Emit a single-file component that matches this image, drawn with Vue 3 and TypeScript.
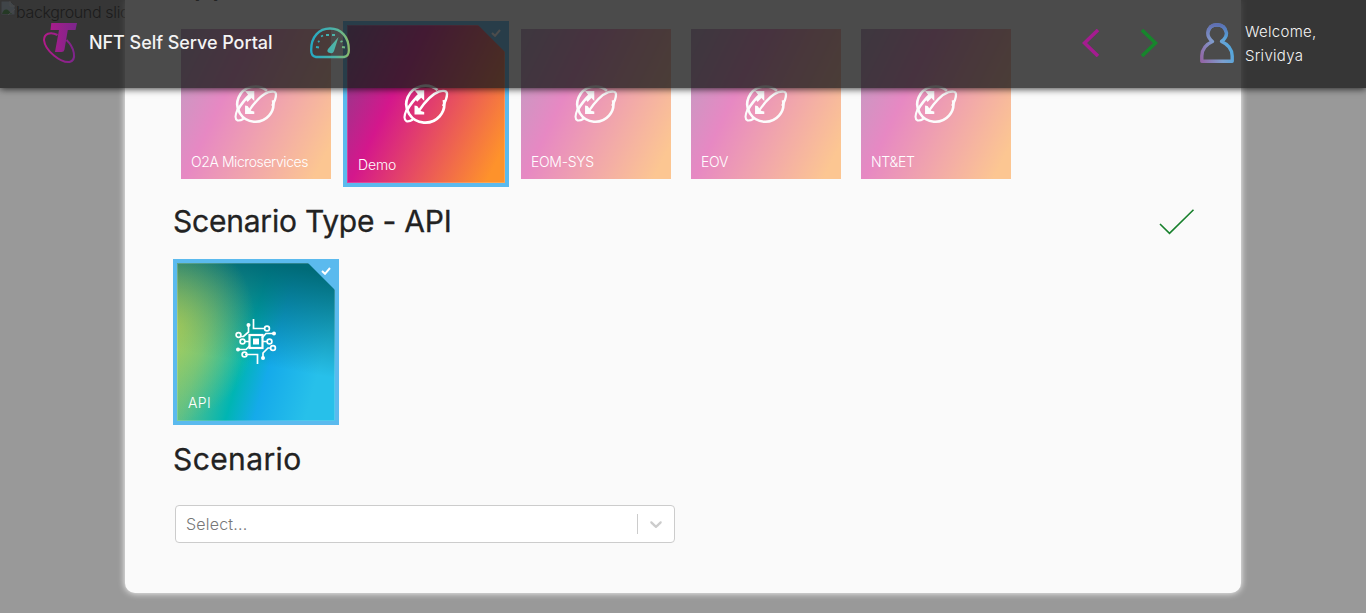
<script setup lang="ts">
interface Tile {
  name: string
  selected: boolean
}

const applications: Tile[] = [
  { name: 'O2A Microservices', selected: false },
  { name: 'Demo', selected: true },
  { name: 'EOM-SYS', selected: false },
  { name: 'EOV', selected: false },
  { name: 'NT&ET', selected: false },
]
</script>

<template>
  <div class="page">
    <div class="backdrop">
      <svg class="broken" viewBox="0 0 16 16">
        <path d="M1 1h9l5 5v9H1z" fill="#c7dcf0" stroke="#909090" />
        <path d="M2 14c1-4 4-6 7-3l3 3z" fill="#4ca64c" />
        <path d="M10 1v5h5M15 9l-7 6" fill="none" stroke="#eee" />
      </svg>
      <span>background slideshow</span>
    </div>

    <header class="topbar">
      <svg class="logo" viewBox="0 0 34 42">
        <defs>
          <linearGradient id="brand" x1="0" x2="34" y1="0" y2="0" gradientUnits="userSpaceOnUse">
            <stop offset="0" stop-color="#b51a8a" />
            <stop offset="1" stop-color="#79268b" />
          </linearGradient>
        </defs>
        <path d="M8.300 1H34l-1.500 7h-7.700L21.500 27.500Q21 30 18.500 30H12l4-22H7.500z" fill="url(#brand)" />
        <path
          d="M14.500 13C7 9 1 12 1 18c1 11 17 23 25.500 22C34.500 38 31 25 23.500 18"
          fill="none" stroke="url(#brand)" stroke-width="2"
        />
      </svg>
      <span class="brand">NFT Self Serve Portal</span>
      <svg class="gauge" viewBox="0 0 40 32">
        <defs>
          <linearGradient id="dial" x1="0" x2="40" y1="0" y2="0" gradientUnits="userSpaceOnUse">
            <stop offset="0" stop-color="#23a8c4" />
            <stop offset=".6" stop-color="#4db3a8" />
            <stop offset="1" stop-color="#8cba68" />
          </linearGradient>
        </defs>
        <path
          d="M6 30Q1 29 1.200 23C1 10 9 1.500 20 1.500S39 10 38.800 23Q39 29 34 30Z"
          fill="none" stroke="url(#dial)" stroke-width="2.300"
        />
        <path d="M28.500 10L24 24q-1 3-4 2-4-1-2-4z" fill="url(#dial)" />
        <path
          d="M16 8h3M22 8h3M11 9.500l2-1M8 15l1.500-1M6 20l3 .5M30.500 15l2-1M32 20l3 .5"
          stroke="url(#dial)" stroke-width="1.800"
        />
      </svg>
      <div class="right">
        <svg class="prev" viewBox="0 0 18 28">
          <path d="M16 1L2.500 14 16 27" fill="none" stroke="#a51c90" stroke-width="3.600" />
        </svg>
        <svg class="next" viewBox="0 0 18 28">
          <path d="M2 1l13.500 13L2 27" fill="none" stroke="#17852c" stroke-width="3.600" />
        </svg>
        <svg class="user" viewBox="0 0 34 40">
          <defs>
            <linearGradient id="person" x1="0" y1="1" x2="1" y2=".5">
              <stop offset="0" stop-color="#9366a6" />
              <stop offset=".55" stop-color="#7da0cf" />
              <stop offset="1" stop-color="#4ba8df" />
            </linearGradient>
            <linearGradient id="personTop" x1="0" x2="0" y1="0" y2="1">
              <stop offset="0" stop-color="#5f62aa" stop-opacity=".8" />
              <stop offset=".4" stop-color="#5f62aa" stop-opacity="0" />
            </linearGradient>
          </defs>
          <g fill="none" stroke-width="3.400" stroke-linejoin="round">
            <path d="M2 38.200H32.200V33Q32 23 21.500 18.500Q26.500 15 26.500 10Q25 2 17 1.800Q9 2 7.800 10Q7.800 15 12.500 18.500Q2 23 1.800 33V38.200Z" stroke="url(#person)" />
            <path d="M2 38.200H32.200V33Q32 23 21.500 18.500Q26.500 15 26.500 10Q25 2 17 1.800Q9 2 7.800 10Q7.800 15 12.500 18.500Q2 23 1.800 33V38.200Z" stroke="url(#personTop)" />
          </g>
        </svg>
        <div class="welcome"><div>Welcome,</div><div class="name">Srividya</div></div>
      </div>
    </header>

    <main class="card">
      <div class="content">
        <div class="heading"><h2 class="h-app">Application - Demo</h2></div>
        <div class="tiles">
          <div v-for="tile in applications" :key="tile.name" class="slot">
            <div class="tile pink" :class="{ selected: tile.selected }">
              <svg class="globe" viewBox="0 0 46 42">
                <g fill="none" stroke="#fff" stroke-width="2.700">
                  <path d="M34.500 7A19 18.500 0 1 0 40.800 17" />
                  <path d="M3.500 28Q9 18 18 10" />
                  <path d="M15 29C21 20 29 11 36 8.500Q44 6.500 44 11Q44 16 40 23" stroke-width="2.400" />
                  <path d="M3.500 27Q-.5 36 3.500 38.200Q6 39 10 36.500" stroke-width="2.200" />
                </g>
                <path d="M11.500 7.300h9.700v10.500l-3-3-4 4-2-2.500 3-4.500zM11.500 22.500v9h9.700v-2.500l-3.500-1-3.500-5z" fill="#fff" />
              </svg>
              <span class="label" :class="{ long: tile.name.length > 10 }">{{ tile.name }}</span>
              <span v-if="tile.selected" class="corner">
                <svg viewBox="0 0 10 8"><path d="M1 4l3 2.800L9 1" /></svg>
              </span>
              <span v-else class="veil"></span>
            </div>
          </div>
        </div>

        <div class="heading">
          <h2 class="h-type">Scenario Type - API</h2>
          <svg class="done" viewBox="0 0 36 26">
            <path d="M1 15l9.500 9.300L34.500 .8" fill="none" stroke="#17802c" stroke-width="1.600" />
          </svg>
        </div>
        <div class="tiles">
          <div class="slot">
            <div class="tile blue selected">
              <svg class="chip" viewBox="0 0 42 46">
                <g fill="none" stroke="#fff" stroke-width="1.700">
                  <path d="M18.500 1v9.500H29M13.500 8v6l-5 4.500H5M10 23.500h5M27 23.500h5M27 20l4-4.500h8M3 31.500h8l4-4M10 36.500h12.500V46M28 40v-5l5-5h3" />
                  <circle cx="32" cy="10.500" r="2.400" /><circle cx="3.500" cy="17" r="2.400" />
                  <circle cx="7.500" cy="23.500" r="2.400" /><circle cx="34.500" cy="23.500" r="2.400" />
                  <circle cx="38" cy="30" r="2.400" /><circle cx="9.500" cy="36.500" r="2.400" />
                  <rect x="14.500" y="17" width="13" height="13" stroke-width="2.200" />
                </g>
                <path d="M18 20.500h6v6h-6z" fill="#fff" />
                <g fill="#fff">
                  <circle cx="13.500" cy="7" r="2" /><circle cx="39" cy="15.500" r="2" />
                  <circle cx="3" cy="31.500" r="2" /><circle cx="28" cy="40" r="2" />
                </g>
              </svg>
              <span class="label api">API</span>
              <span class="corner">
                <svg viewBox="0 0 10 8"><path d="M1 4l3 2.800L9 1" /></svg>
              </span>
            </div>
          </div>
        </div>

        <div class="heading"><h2 class="h-scenario">Scenario</h2></div>
        <div class="select">
          <span class="placeholder">Select...</span>
          <span class="divider"></span>
          <svg class="chevron" viewBox="0 0 20 20">
            <path d="M4.516 7.548c.436-.446 1.043-.481 1.576 0L10 11.295l3.908-3.747c.533-.481 1.141-.446 1.574 0 .436.445.408 1.197 0 1.615-.406.418-4.695 4.502-4.695 4.502a1.095 1.095 0 0 1-1.576 0S4.924 9.581 4.516 9.163s-.436-1.170 0-1.615z" />
          </svg>
        </div>
      </div>
    </main>
  </div>
</template>

<style>
body {
  background: #999;
  overflow: hidden;
}
</style>

<style scoped>
.page {
  position: relative;
  height: 613px;
  overflow: hidden;
  background: #999;
  font-family: Inter, "Liberation Sans", sans-serif;
  color: #222;
}
.backdrop {
  position: absolute;
  left: 0;
  top: 0;
  display: flex;
  font-size: 16px;
  font-weight: 300;
  line-height: 24px;
  letter-spacing: -0.35px;
  color: #222;
}
.broken {
  width: 16px;
  height: 16px;
}
.topbar {
  position: absolute;
  inset: 0 0 auto 0;
  z-index: 5;
  height: 88px;
  box-sizing: border-box;
  padding: 0 50px 2px 43px;
  display: flex;
  align-items: center;
  background: rgba(27, 27, 27, 0.784);
  box-shadow: 0 1px 7px rgba(0, 0, 0, 0.75);
  color: #f4f4f4;
}
.logo {
  width: 34px;
  height: 42px;
}
.brand {
  width: 221px;
  margin: -1px 0 0 12px;
  font-size: 18px;
  font-weight: 500;
  letter-spacing: -0.05px;
  white-space: nowrap;
}
.gauge {
  width: 40px;
  height: 32px;
}
.right {
  margin-left: auto;
  display: flex;
  align-items: center;
}
.prev,
.next {
  width: 18px;
  height: 28px;
}
.next {
  margin-left: 40px;
}
.user {
  width: 34px;
  height: 40px;
  margin-left: 42px;
}
.welcome {
  width: 71px;
  margin-left: 11px;
  padding-top: 2px;
  font-size: 15px;
  font-weight: 300;
  line-height: 24px;
  letter-spacing: 0.3px;
  white-space: nowrap;
}
.card {
  position: relative;
  height: 593px;
  margin: 0 125px;
  overflow: hidden;
  background: #fafafa;
  border-radius: 0 0 10px 10px;
  box-shadow: 0 0 7px #fff;
}
.content {
  margin: -49px 46px 0;
}
.heading {
  height: 68px;
  display: flex;
  align-items: center;
  justify-content: space-between;
}
h2 {
  margin: -5px 0 0 2px;
  font-size: 30px;
  font-weight: 400;
  line-height: 40px;
  white-space: nowrap;
  -webkit-text-stroke: 0.3px #222;
}
.h-app {
  margin-top: -3px;
}
.h-type {
  letter-spacing: -0.22px;
}
.h-scenario {
  letter-spacing: 0.4px;
}
.done {
  width: 36px;
  height: 26px;
  margin-top: -2px;
}
.tiles {
  display: flex;
}
.slot {
  width: 170px;
  height: 170px;
  display: flex;
  align-items: center;
  justify-content: center;
}
.tile {
  position: relative;
  width: 150px;
  height: 150px;
  display: flex;
  align-items: center;
  justify-content: center;
}
.pink {
  background: linear-gradient(116deg, #7d468b 0%, #d4178c 34%, #fe922b 92%);
}
.blue {
  background:
    radial-gradient(ellipse 50% 60% at 0 40%, rgba(190, 210, 75, 0.6), transparent),
    linear-gradient(190deg, #006b78 6%, rgba(0, 112, 125, 0) 62%),
    linear-gradient(106deg, #9ccc68 0%, #5cc088 24%, #00b5b3 46%, #15aaea 60%, #27c0ea 85%);
}
.veil {
  position: absolute;
  inset: 0;
  background: rgba(250, 250, 250, 0.5);
}
.selected {
  width: 158px;
  height: 158px;
  outline: 4px solid #5bbaee;
  box-shadow: inset 0 0 0 1px rgba(255, 255, 255, 0.18);
}
.globe {
  width: 44px;
  height: 40px;
}
.selected .globe {
  width: 46px;
  height: 42px;
}
.chip {
  width: 42px;
  height: 46px;
  margin-top: -2px;
}
.label {
  position: absolute;
  z-index: 1;
  left: 10px;
  bottom: 8px;
  color: #fff;
  font-size: 14px;
  font-weight: 300;
  line-height: 18px;
  letter-spacing: -0.3px;
  white-space: nowrap;
}
.label.long {
  letter-spacing: -0.42px;
}
.selected .label {
  left: 11px;
  bottom: 9px;
  letter-spacing: -0.15px;
}
.selected .label.api {
  letter-spacing: 0.4px;
}
.corner {
  position: absolute;
  top: 0;
  right: 0;
  width: 27px;
  height: 27px;
  background: #5bbaee;
  clip-path: polygon(0 0, 100% 0, 100% 100%);
}
.corner svg {
  position: absolute;
  left: 13px;
  top: 4px;
  width: 10px;
  height: 8px;
}
.corner path {
  fill: none;
  stroke: #fff;
  stroke-width: 2;
}
.select {
  width: 500px;
  height: 38px;
  margin: 10px 0 0 4px;
  box-sizing: border-box;
  display: flex;
  align-items: center;
  background: #fff;
  border: 1px solid #ccc;
  border-radius: 4px;
}
.placeholder {
  flex: 1;
  padding-left: 10px;
  font-size: 16px;
  font-weight: 300;
  letter-spacing: 0.2px;
  color: #777;
}
.divider {
  width: 1px;
  height: 20px;
  background: #ccc;
}
.chevron {
  width: 20px;
  height: 20px;
  margin: 0 8px;
  fill: #ccc;
}
</style>
